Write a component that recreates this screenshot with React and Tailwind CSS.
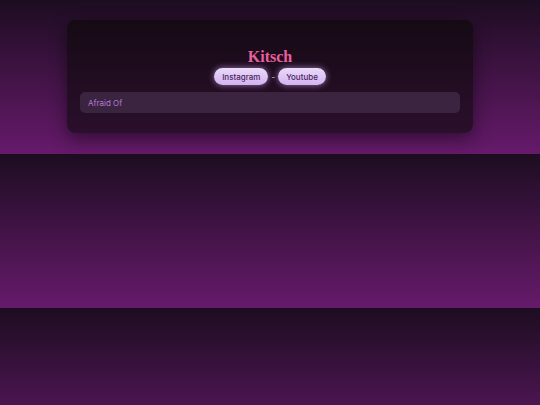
export default function App() {
  return (
    <div className="w-[540px] h-[405px] overflow-hidden bg-[linear-gradient(to_bottom,#1d0d21,#661a6b)] bg-[length:100%_154px] bg-repeat-y">
      <div className="pt-5 px-[67px]">
        <div className="w-[406px] h-[113px] rounded-lg bg-[linear-gradient(to_bottom,#150a14,#2b0f2c)] shadow-[0_6px_18px_rgba(0,0,0,0.45)] px-[13px] pt-[27px] flex flex-col items-center">
          <h1 className="font-['Liberation_Serif',serif] font-bold text-[16px] leading-[20px] text-[#e8609f]">Kitsch</h1>
          <div className="mt-[1px] flex items-center gap-[3px] font-['Inter',sans-serif] text-[8px] font-medium">
            <span className="h-[17px] px-[8px] flex items-center rounded-full bg-[linear-gradient(to_bottom,#eadaf9,#d2b4f0)] text-[#4b1f5c] shadow-[0_0_6px_rgba(205,160,240,0.7)]">Instagram</span>
            <span className="text-[#c7a6df] text-[8px]">-</span>
            <span className="h-[17px] px-[8px] flex items-center rounded-full bg-[linear-gradient(to_bottom,#eadaf9,#d2b4f0)] text-[#4b1f5c] shadow-[0_0_6px_rgba(205,160,240,0.7)]">Youtube</span>
          </div>
          <div className="mt-[7px] w-full h-[21px] rounded-[5px] bg-[#3a2440] flex items-center px-[8px] font-['Inter',sans-serif] text-[8px] text-[#b57ad6]">
            Afraid Of
          </div>
        </div>
      </div>
    </div>
  );
}
